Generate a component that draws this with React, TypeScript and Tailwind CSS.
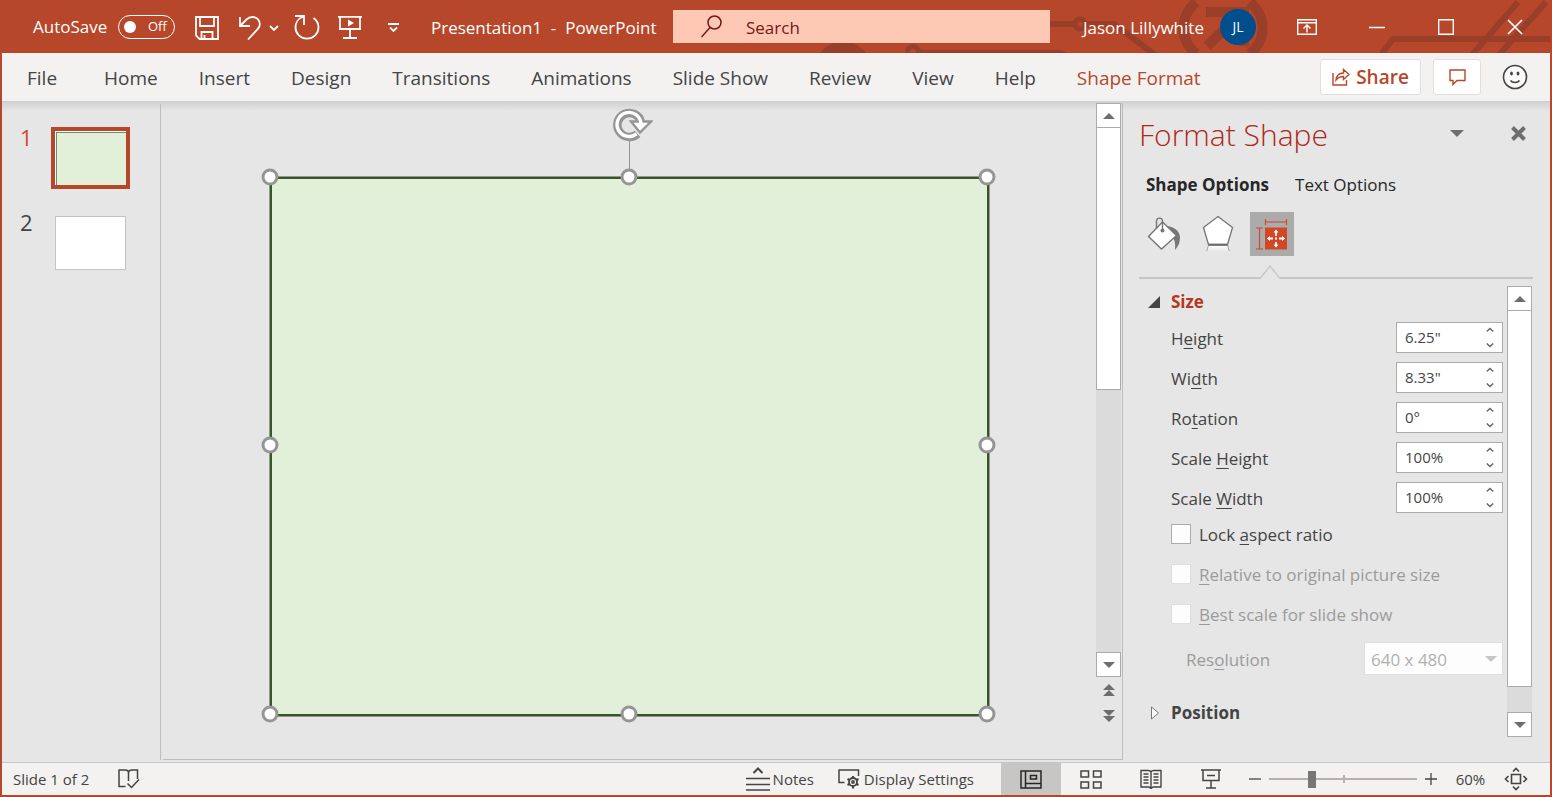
import React from 'react';

type IconProps = { className?: string };

const SaveIcon = () => (
  <svg width="24" height="24" viewBox="0 0 24 24" fill="none" stroke="currentColor" strokeWidth="1.8">
    <path d="M1 1h22v22H4.5L1 19.5z" />
    <path d="M5 1v9h14V1M6.5 23v-7h11v7M9.5 19v4" />
  </svg>
);

const UndoIcon = () => (
  <svg width="22" height="24" viewBox="0 0 22 24" fill="none" stroke="currentColor" strokeWidth="1.8">
    <path d="M1 1v9h10" />
    <path d="M1 10l6.5-6.5C11 .2 16 .2 18.800 3.200c2.800 3 2.600 7.200 0 9.800L9 23.500" />
  </svg>
);

const RedoIcon = () => (
  <svg width="26" height="25" viewBox="0 0 26 25" fill="none" stroke="currentColor" strokeWidth="1.8">
    <path d="M1 1h9v9" />
    <path d="M9.500 1.500C4.500 3 1.500 7.500 1.500 12.500c0 6.200 5 11.200 11.500 11.200s11.500-5 11.500-11.200c0-4-2-7.400-5-9.400" />
  </svg>
);

const PresentIcon = () => (
  <svg width="24" height="25" viewBox="0 0 24 25" fill="none" stroke="currentColor" strokeWidth="1.8">
    <path d="M0 1.800h24M2 2v12h20V2M12 14v8M5 23h14" />
    <path d="M10 4.500v7l6-3.500z" fill="currentColor" stroke="none" />
  </svg>
);

const ChevronDown = ({ className }: IconProps) => (
  <svg className={className} width="10" height="6" viewBox="0 0 10 6" fill="none" stroke="currentColor" strokeWidth="1.8">
    <path d="M1 1l4 4 4-4" />
  </svg>
);

const CustomizeIcon = () => (
  <svg width="11" height="9" viewBox="0 0 11 9" fill="none" stroke="currentColor" strokeWidth="1.800">
    <path d="M0 1h11M2 4.500l3.500 3.500L9 4.500" />
  </svg>
);

const SearchIcon = () => (
  <svg width="21" height="23" viewBox="0 0 21 23" fill="none" stroke="currentColor" strokeWidth="1.500">
    <circle cx="13.500" cy="7.500" r="6.500" />
    <path d="M9 12.500L.5 22" />
  </svg>
);

const RibbonDisplayIcon = () => (
  <svg width="20" height="16" viewBox="0 0 20 16" fill="none" stroke="currentColor" strokeWidth="1.400">
    <path d="M.7.7h18.600v14.600H.7zM.7 3.700h18.600M10 13.500V6.500M6.500 9.500L10 6l3.500 3.500" />
  </svg>
);

const MinimizeIcon = () => (
  <svg width="16" height="16" viewBox="0 0 16 16" stroke="currentColor" strokeWidth="1.500">
    <path d="M0 8.500h16" />
  </svg>
);

const MaximizeIcon = () => (
  <svg width="16" height="16" viewBox="0 0 16 16" fill="none" stroke="currentColor" strokeWidth="1.400">
    <path d="M.7.7h14.600v14.600H.7z" />
  </svg>
);

const CloseIcon = () => (
  <svg width="16" height="16" viewBox="0 0 16 16" fill="none" stroke="currentColor" strokeWidth="1.700">
    <path d="M1 1l14 14M15 1L1 15" />
  </svg>
);

const ShareIcon = () => (
  <svg width="18" height="18" viewBox="0 0 18 18" fill="none" stroke="currentColor" strokeWidth="1.400">
    <path d="M1 5v12h13.500v-5" />
    <path d="M4 12c.5-4.500 3-7 7.500-7V1.500L17 6.500l-5.500 5V8.500C8 8.500 6 9.500 4 12z" />
  </svg>
);

const CommentIcon = () => (
  <svg width="17" height="17" viewBox="0 0 17 17" fill="none" stroke="currentColor" strokeWidth="1.400">
    <path d="M1 1h15v10.500H8L4 15.500v-4H1z" />
  </svg>
);

const SmileIcon = () => (
  <svg width="26" height="26" viewBox="0 0 26 26" fill="none" stroke="currentColor" strokeWidth="1.600">
    <circle cx="13" cy="13" r="11.500" fill="#fafafa" />
    <path d="M8.500 16.500c2 2.600 7 2.600 9 0" />
    <ellipse cx="9.500" cy="9.500" rx="1.400" ry="2" fill="currentColor" stroke="none" />
    <ellipse cx="16" cy="9.500" rx="1.400" ry="2" fill="currentColor" stroke="none" />
  </svg>
);

const Triangle = ({ up, className }: { up?: boolean; className?: string }) => (
  <svg className={className} width="12" height="6" viewBox="0 0 12 6" fill="currentColor">
    {up ? <path d="M0 6L6 0l6 6z" /> : <path d="M0 0h12L6 6z" />}
  </svg>
);

const DoubleTriangle = ({ up }: { up?: boolean }) => (
  <svg width="12" height="12" viewBox="0 0 12 12" fill="currentColor">
    {up ? <path d="M0 6L6 0l6 6zM0 12l6-6 6 6z" /> : <path d="M0 0h12L6 6zM0 6h12l-6 6z" />}
  </svg>
);

const RotateHandle = () => (
  <svg width="40" height="34" viewBox="0 0 40 34" fill="none">
    <path d="M24.500 25.800A12 12 0 1 1 28 14" stroke="#959595" strokeWidth="8.500" />
    <path d="M18 13.500h20L27 24.500z" fill="#fff" stroke="#959595" strokeWidth="2.400" />
    <path d="M23.500 25.800A12 12 0 1 1 28 15.500" stroke="#fff" strokeWidth="3.400" />
    <path d="M23 15.500h10.500L27.500 21z" fill="#fff" />
  </svg>
);

const FillIcon = () => (
  <svg width="34" height="34" viewBox="0 0 34 34" fill="none">
    <path d="M20 9c7 1 12.500 4.500 13 11 .2 5-1.500 9-5 13 .5-6 .3-10-3-13z" fill="#767676" />
    <path d="M1.500 19.500L15.500 5l14 13.500L14.500 32z" fill="#fff" stroke="#767676" strokeWidth="1.400" />
    <path d="M9.500 11.500V4.500c0-4.500 6-4.500 6 0V13" stroke="#767676" strokeWidth="1.400" />
    <circle cx="15.500" cy="13.500" r="2" fill="#767676" />
  </svg>
);

const EffectsIcon = () => (
  <svg width="32" height="38" viewBox="0 0 32 38" fill="none">
    <defs>
      <linearGradient id="reflection" x1="0" y1="0" x2="0" y2="1">
        <stop offset="0" stopColor="#fff" />
        <stop offset="1" stopColor="#fff" stopOpacity="0" />
      </linearGradient>
    </defs>
    <path d="M7 30h18l2 7H5z" fill="url(#reflection)" />
    <path d="M6.500 30l-1.800 6M25.500 30l1.800 6" stroke="#a5a5a5" />
    <path d="M16 1.500l14.500 11L25.500 29.500h-19l-5-17z" fill="#fff" stroke="#767676" strokeWidth="1.300" />
    <path d="M6.500 29.800h19" stroke="#6a6a6a" strokeWidth="2" />
  </svg>
);

const SizeIcon = () => (
  <svg width="32" height="32" viewBox="0 0 32 32" fill="none">
    <path d="M9.500 4h21.500M9.500 1v6M30.500 1v6" stroke="#d24726" strokeWidth="1.200" />
    <path d="M3.500 10v21M0 10h7M0 31h7" stroke="#d24726" strokeWidth="1.200" />
    <path d="M9 9.500h22v22H9z" fill="#d24726" />
    <path d="M20 14v4M20 24v5M12 20.500h5M23 20.500h5" stroke="#fff" strokeWidth="1.800" />
    <path d="M17.500 14.500L20 11.500l2.500 3zM17.500 26.500l2.500 3 2.500-3zM14 18l-3 2.500 3 2.500zM26 18l3 2.500-3 2.500z" fill="#fff" />
    <path d="M19 19.500h2v2h-2z" fill="#fff" />
  </svg>
);

const ProofIcon = () => (
  <svg width="22" height="20" viewBox="0 0 22 20" fill="none" stroke="currentColor" strokeWidth="1.500">
    <path d="M7.500 17.500H1V1h6c2 0 3.500.8 3.500 2.500V12M10.500 3.500C10.500 1.800 12 1 14 1h5.500v9" />
    <path d="M9.500 14.500l4 4 7.500-8" />
  </svg>
);

const NotesIcon = () => (
  <svg width="24" height="24" viewBox="0 0 24 24" fill="none" stroke="currentColor" strokeWidth="1.500">
    <path d="M0 11.500h24M0 17.500h24M0 23h24" />
    <path d="M7.500 6L12 1.500 16.500 6" strokeWidth="2" />
  </svg>
);

const DisplayIcon = () => (
  <svg width="22" height="20" viewBox="0 0 22 20" fill="none" stroke="currentColor" strokeWidth="1.500">
    <path d="M6.500 13.500H1V1h19.500v6" />
    <circle cx="15" cy="13" r="4" strokeWidth="1.800" />
    <circle cx="15" cy="13" r="1.200" />
    <path d="M15 7v2M15 17v2.500M9.500 10l2 1M18.500 15l2 1M9.500 16l2-1M18.500 11l2-1" strokeWidth="2" />
  </svg>
);

const NormalViewIcon = () => (
  <svg width="22" height="19" viewBox="0 0 22 19" fill="none" stroke="currentColor" strokeWidth="1.500">
    <path d="M1 1h20v17H1zM5.500 1v17M5.500 13.500H21M10.500 5.500h6v3.500h-6z" />
  </svg>
);

const SorterIcon = () => (
  <svg width="22" height="19" viewBox="0 0 22 19" fill="none" stroke="currentColor" strokeWidth="1.500">
    <path d="M1 1h7.500v6H1zM13.500 1H21v6h-7.500zM1 12h7.500v6H1zM13.500 12H21v6h-7.500z" />
  </svg>
);

const ReadingIcon = () => (
  <svg width="22" height="20" viewBox="0 0 22 20" fill="none" stroke="currentColor" strokeWidth="1.400">
    <path d="M1 1.500h7c2 0 3 .8 3 2 0-1.200 1-2 3-2h7V18h-8l-2 1.500L9 18H1zM11 3v16" />
    <path d="M3.500 5h5M3.500 8h5M3.500 11h5M3.500 14h5M13.500 5h5M13.500 8h5M13.500 11h5M13.500 14h5" />
  </svg>
);

const SlideShowIcon = () => (
  <svg width="20" height="20" viewBox="0 0 20 20" fill="none" stroke="currentColor" strokeWidth="1.500">
    <path d="M0 1h20M2 1v10.500h16V1M6 6.500h8M10 11.500V19M5 19h10" />
  </svg>
);

const FitIcon = () => (
  <svg width="24" height="24" viewBox="0 0 24 24" fill="none" stroke="currentColor" strokeWidth="1.600">
    <path d="M7.500 7.500h9v9h-9z" />
    <path d="M9 4.500l3-3 3 3M9 19.500l3 3 3-3M4.500 9l-3 3 3 3M19.500 9l3 3-3 3" />
  </svg>
);

const TitleArt = () => (
  <svg className="absolute top-0 right-0 -z-10" width="760" height="53" viewBox="790 0 760 53" fill="none" stroke="#993f29">
    <circle cx="843" cy="70" r="24" strokeWidth="9" />
    <path d="M829 51h25" strokeWidth="6" />
    <circle cx="913" cy="52" r="5.500" strokeWidth="5" />
    <path d="M919 52h142l9 5" strokeWidth="4" />
    <path d="M1050 24h24" strokeWidth="6" />
    <circle cx="1080" cy="24" r="5" strokeWidth="5" />
    <path d="M1086 24h28l44 33" strokeWidth="6" />
    <path d="M1196 2c-17 15-17 37 0 52M1250 2c17 15 17 37 0 52" strokeWidth="10" />
    <path d="M1206 12h38v34M1243 12l-36 34" strokeWidth="10" />
    <path d="M1380 56l13-17h159" strokeWidth="6" />
    <path d="M1471 56l47-54M1498 56l48-54" strokeWidth="6" />
  </svg>
);

const tabs = ['File', 'Home', 'Insert', 'Design', 'Transitions', 'Animations', 'Slide Show', 'Review', 'View', 'Help'];

const handles = [
  'left-0 top-0',
  'left-1/2 top-0',
  'left-full top-0',
  'left-0 top-1/2',
  'left-full top-1/2',
  'left-0 top-full',
  'left-1/2 top-full',
  'left-full top-full',
];

const Mnemonic = ({ text }: { text: string }) => {
  const [before, key, after] = text.split('_');
  return (
    <>
      {before}
      <span className="underline decoration-1 underline-offset-3">{key}</span>
      {after}
    </>
  );
};

const SpinField = ({ id, label, value }: { id: string; label: string; value: string }) => (
  <div className="flex items-center justify-between">
    <label htmlFor={id} className="pt-[2px]">
      <Mnemonic text={label} />
    </label>
    <div className="flex h-[31px] w-[107px] border border-[#ababab] bg-white">
      <input id={id} type="text" defaultValue={value} className="w-full min-w-0 flex-1 bg-transparent pl-2 text-[15px] outline-none" />
      <div className="flex w-[25px] shrink-0 flex-col text-[#666]">
        <button type="button" aria-label="Increase" className="flex flex-1 items-center justify-center">
          <ChevronDown className="w-2 rotate-180" />
        </button>
        <button type="button" aria-label="Decrease" className="flex flex-1 items-center justify-center">
          <ChevronDown className="w-2" />
        </button>
      </div>
    </div>
  </div>
);

const CheckField = ({ id, label, disabled }: { id: string; label: string; disabled?: boolean }) => (
  <div className="flex h-5 items-center gap-2">
    <input
      id={id}
      type="checkbox"
      disabled={disabled}
      className="size-5 appearance-none border border-[#ababab] bg-[#fdfdfd] disabled:border-[#dedede]"
    />
    <label htmlFor={id} className={disabled ? 'pt-[2px] text-[#9b9b9b]' : 'pt-[2px]'}>
      <Mnemonic text={label} />
    </label>
  </div>
);

const ScrollButton = ({ up }: { up?: boolean }) => (
  <button type="button" aria-label={up ? 'Scroll up' : 'Scroll down'} className="flex h-[25px] shrink-0 items-center justify-center border border-[#ababab] bg-white text-[#6e6e6e]">
    <Triangle up={up} />
  </button>
);

const TitleBar = () => (
  <header className="relative isolate flex h-[53px] shrink-0 items-center bg-[#b7472a] pl-[31px] text-[17px] text-white">
    <TitleArt />
    <span className="w-[85px]">AutoSave</span>
    <button type="button" role="switch" aria-checked="false" className="flex h-6 w-[57px] items-center gap-3 rounded-full border border-white pl-[5px] text-[13px]">
      <span className="size-3 rounded-full bg-white" />
      Off
    </button>
    <div className="ml-5 flex items-center pt-[2px]">
      <button type="button" aria-label="Save"><SaveIcon /></button>
      <button type="button" aria-label="Undo" className="ml-5"><UndoIcon /></button>
      <button type="button" aria-label="Undo history" className="ml-2"><ChevronDown /></button>
      <button type="button" aria-label="Redo" className="ml-[15px]"><RedoIcon /></button>
      <button type="button" aria-label="Start from beginning" className="ml-[18px]"><PresentIcon /></button>
      <button type="button" aria-label="Customize toolbar" className="ml-[26px]"><CustomizeIcon /></button>
    </div>
    <div className="ml-8 w-[242px] pt-[2px] whitespace-pre">Presentation1  -  PowerPoint</div>
    <label className="flex h-[33px] flex-1 items-center gap-6 bg-[#fdc9b5] pl-7 text-[#7a1517]">
      <SearchIcon />
      <input type="text" aria-label="Search" placeholder="Search" className="min-w-0 flex-1 bg-transparent pt-[2px] outline-none placeholder:text-[#7a1517]" />
    </label>
    <span className="ml-[33px] w-[137px] pt-[2px]">Jason Lillywhite</span>
    <span className="flex size-9 items-center justify-center rounded-full bg-[#004e8c] text-[14px]">JL</span>
    <div className="ml-4 flex">
      <button type="button" aria-label="Ribbon display options" className="flex w-[70px] justify-center"><RibbonDisplayIcon /></button>
      <button type="button" aria-label="Minimize" className="flex w-[69px] justify-center"><MinimizeIcon /></button>
      <button type="button" aria-label="Maximize" className="flex w-[69px] justify-center"><MaximizeIcon /></button>
      <button type="button" aria-label="Close" className="flex w-[70px] justify-center"><CloseIcon /></button>
    </div>
  </header>
);

const Ribbon = () => (
  <nav className="flex h-12 shrink-0 items-center bg-[#f3f2f1] pr-[22px] text-[19px] text-[#444]">
    {tabs.map((tab) => (
      <button type="button" key={tab} className="pt-[2px] pr-[21px] pl-5 whitespace-nowrap first:pr-[27px] first:pl-[25px]">
        {tab}
      </button>
    ))}
    <button type="button" className="pt-[2px] pl-5 whitespace-nowrap text-[#b7472a]">Shape Format</button>
    <div className="ml-auto flex items-center">
      <button type="button" className="flex h-9 w-[101px] items-center justify-center gap-[6px] rounded-[3px] border border-[#e1dfdd] bg-white font-semibold text-[#b7472a]">
        <ShareIcon />
        Share
      </button>
      <button type="button" aria-label="Comments" className="ml-3 flex h-9 w-12 items-center justify-center rounded-[3px] border border-[#e1dfdd] bg-white text-[#b7472a]">
        <CommentIcon />
      </button>
      <button type="button" aria-label="Feedback" className="ml-[21px]"><SmileIcon /></button>
    </div>
  </nav>
);

const SlideList = () => (
  <aside className="mt-[3px] mb-[2px] w-[159px] shrink-0 border-r border-[#bdbdbd] pt-[23px] pl-[18px] text-[22px]">
    <div className="flex gap-[19px]">
      <span className="w-3 leading-5 text-[#d24726]">1</span>
      <button type="button" aria-label="Slide 1" className="h-[62px] w-[79px] border-4 border-[#b7472a] bg-white pt-px pl-px">
        <span className="block h-full border-t border-l border-[#6f8f5c] bg-[#e2efd9]" />
      </button>
    </div>
    <div className="mt-[27px] flex gap-[23px]">
      <span className="w-3 leading-3 text-[#444]">2</span>
      <button type="button" aria-label="Slide 2" className="h-[54px] w-[71px] border border-[#c3c3c3] bg-white" />
    </div>
  </aside>
);

const Canvas = () => (
  <main className="mt-[2px] mb-[2px] ml-[2px] flex min-w-0 flex-1 border-r border-b border-[#bdbdbd]">
    <div className="min-w-0 flex-1 pt-[74px]">
      <div className="relative mx-auto aspect-[4/3] w-[77%] border-2 border-[#375623] bg-[#e2efd9] outline-1 outline-[#959595]">
        <div className="absolute -top-[2px] right-0 bottom-0 -left-[2px]">
          <span className="absolute bottom-full left-1/2 h-9 w-px bg-[#959595]" />
          <span className="absolute bottom-full left-1/2 -ml-4 mb-[35px]"><RotateHandle /></span>
          {handles.map((place) => (
            <span key={place} className={`absolute size-[17px] -translate-x-1/2 -translate-y-1/2 rounded-full border-3 border-[#959595] bg-white ${place}`} />
          ))}
        </div>
      </div>
    </div>
    <div className="mr-px flex w-[25px] shrink-0 flex-col">
      <ScrollButton up />
      <div className="flex flex-1 flex-col bg-[#dbdbdb]">
        <div className="h-1/2 border border-t-0 border-[#ababab] bg-white" />
      </div>
      <ScrollButton />
      <button type="button" aria-label="Previous slide" className="flex h-[26px] items-center justify-center text-[#6e6e6e]"><DoubleTriangle up /></button>
      <button type="button" aria-label="Next slide" className="mb-[30px] flex h-[26px] items-center justify-center text-[#6e6e6e]"><DoubleTriangle /></button>
    </div>
  </main>
);

const FormatPane = () => (
  <aside className="flex w-[427px] shrink-0 flex-col pl-4 text-[17px] text-[#444]">
    <div className="mt-[10px] flex h-11 items-center pr-[24px]">
      <h2 className="flex-1 pt-[2px] text-[30px] font-light text-[#b0281a]">Format Shape</h2>
      <button type="button" aria-label="Pane options" className="text-[#6e6e6e]">
        <svg width="14" height="7" viewBox="0 0 14 7" fill="currentColor"><path d="M0 0h14L7 7z" /></svg>
      </button>
      <button type="button" aria-label="Close pane" className="ml-[47px] text-[#6e6e6e]">
        <svg width="15" height="15" viewBox="0 0 15 15" stroke="currentColor" strokeWidth="4"><path d="M1.500 1.500l12 12M13.500 1.500l-12 12" /></svg>
      </button>
    </div>
    <div className="mt-[18px] flex h-6 items-center gap-[26px] pl-[7px] text-[#262626]">
      <button type="button" className="font-bold">Shape Options</button>
      <button type="button">Text Options</button>
    </div>
    <div className="mt-[15px] flex h-11 items-center pl-2">
      <button type="button" aria-label="Fill and line" className="w-[34px]"><FillIcon /></button>
      <button type="button" aria-label="Effects" className="ml-[21px] w-8"><EffectsIcon /></button>
      <button type="button" aria-label="Size and properties" className="ml-4 flex size-11 items-center justify-center bg-[#ababab]"><SizeIcon /></button>
    </div>
    <div className="mt-[9px] mr-[17px] flex h-[14px] items-end">
      <span className="h-[2px] w-[121px] bg-[#c6c6c6]" />
      <svg width="20" height="14" viewBox="0 0 20 14" fill="none" stroke="#c6c6c6" strokeWidth="1.300"><path d="M0 13.500L10 1l10 12.500" /></svg>
      <span className="h-[2px] flex-1 bg-[#c6c6c6]" />
    </div>
    <div className="mt-[7px] mr-[18px] mb-[25px] flex min-h-0 flex-1">
      <div className="flex-1 pr-1 pl-2">
        <button type="button" className="flex h-8 items-center gap-[11px] pl-px font-bold text-[#b7361c]">
          <svg width="12" height="12" viewBox="0 0 12 12" fill="#444"><path d="M12 0v12H0z" /></svg>
          Size
        </button>
        <div className="mt-1 flex flex-col gap-[9px] pl-6">
          <SpinField id="height" label="H_e_ight" value={'6.25"'} />
          <SpinField id="width" label="Wi_d_th" value={'8.33"'} />
          <SpinField id="rotation" label="Ro_t_ation" value="0°" />
          <SpinField id="scale-height" label="Scale _H_eight" value="100%" />
          <SpinField id="scale-width" label="Scale _W_idth" value="100%" />
        </div>
        <div className="mt-[11px] flex flex-col gap-5 pl-6">
          <CheckField id="lock" label="Lock _a_spect ratio" />
          <CheckField id="relative" label="_R_elative to original picture size" disabled />
          <CheckField id="best" label="_B_est scale for slide show" disabled />
        </div>
        <div className="mt-[18px] flex items-center justify-between pl-[39px] text-[#9b9b9b]">
          <label htmlFor="resolution" className="pt-[2px]"><Mnemonic text="Res_o_lution" /></label>
          <div className="relative">
            <select id="resolution" disabled className="block h-[33px] w-[139px] appearance-none border border-[#dedede] bg-[#fdfdfd] pt-[2px] pl-[6px] text-[#b1b1b1] opacity-100">
              <option>640 x 480</option>
            </select>
            <Triangle className="absolute top-[14px] right-[6px] text-[#c6c6c6]" />
          </div>
        </div>
        <button type="button" className="mt-[22px] flex h-8 items-center gap-3 pl-1 font-bold">
          <svg width="8" height="14" viewBox="0 0 8 14" fill="#fff" stroke="#777"><path d="M.5 1v12L7.500 7z" /></svg>
          Position
        </button>
      </div>
      <div className="flex w-[25px] flex-col">
        <ScrollButton up />
        <div className="flex flex-1 flex-col bg-[#dbdbdb] pb-[25px]">
          <div className="flex-1 border border-t-0 border-[#ababab] bg-white" />
        </div>
        <ScrollButton />
      </div>
    </div>
  </aside>
);

const StatusBar = () => (
  <footer className="flex h-[33px] shrink-0 items-stretch border-t border-[#c6c6c6] bg-[#f3f2f1] pl-[11px] text-[15px] text-[#444]">
    <span className="self-center">Slide 1 of 2</span>
    <button type="button" aria-label="Proofing" className="ml-[29px]"><ProofIcon /></button>
    <div className="ml-auto flex">
      <button type="button" className="flex items-center gap-[3px]"><NotesIcon />Notes</button>
      <button type="button" className="ml-6 flex items-center gap-1"><DisplayIcon />Display Settings</button>
      <button type="button" aria-label="Normal view" className="ml-[27px] flex w-[60px] items-center justify-center bg-[#c8c6c4] text-[#262626]"><NormalViewIcon /></button>
      <button type="button" aria-label="Slide sorter" className="flex w-[60px] items-center justify-center"><SorterIcon /></button>
      <button type="button" aria-label="Reading view" className="flex w-[60px] items-center justify-center"><ReadingIcon /></button>
      <button type="button" aria-label="Slide show" className="flex w-[60px] items-center justify-center"><SlideShowIcon /></button>
      <button type="button" aria-label="Zoom out" className="ml-2">
        <svg width="12" height="12" viewBox="0 0 12 12" stroke="currentColor" strokeWidth="1.300"><path d="M0 6h12" /></svg>
      </button>
      <div className="relative ml-2 flex w-[148px] items-center">
        <span className="absolute left-1/2 h-2 w-[2px] bg-[#b3b0ad]" />
        <input
          type="range"
          aria-label="Zoom"
          min="0"
          max="100"
          defaultValue="28"
          className="relative h-[17px] w-full appearance-none bg-[linear-gradient(#b3b0ad,#b3b0ad)] bg-[length:100%_2px] bg-center bg-no-repeat [&::-webkit-slider-thumb]:h-[17px] [&::-webkit-slider-thumb]:w-2 [&::-webkit-slider-thumb]:appearance-none [&::-webkit-slider-thumb]:bg-[#797775]"
        />
      </div>
      <button type="button" aria-label="Zoom in" className="ml-2">
        <svg width="12" height="12" viewBox="0 0 12 12" stroke="currentColor" strokeWidth="1.300"><path d="M0 6h12M6 0v12" /></svg>
      </button>
      <button type="button" className="w-[67px] text-center">60%</button>
      <button type="button" aria-label="Fit to window" className="mr-[22px]"><FitIcon /></button>
    </div>
  </footer>
);

export default function App() {
  return (
    <div className="flex h-screen flex-col border-x-2 border-b-2 border-[#b7472a] bg-[#e6e6e6] font-['Open_Sans','Noto_Sans',sans-serif]">
      <TitleBar />
      <Ribbon />
      <div className="flex min-h-0 flex-1 bg-[linear-gradient(#cfcfcf,#e6e6e6_10px)]">
        <SlideList />
        <Canvas />
        <FormatPane />
      </div>
      <StatusBar />
    </div>
  );
}
